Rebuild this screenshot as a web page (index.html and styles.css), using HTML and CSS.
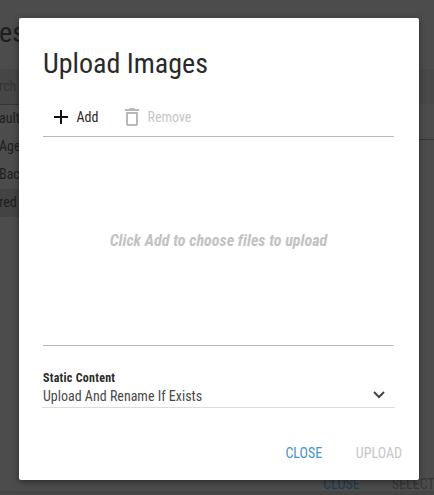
FILE: index.html
```html
<!DOCTYPE html>
<html lang="en">
<head>
<meta charset="utf-8">
<title>Upload Images</title>
<link rel="stylesheet" href="styles.css">
</head>
<body>
<div class="page">
  <h2 class="page-title">es</h2>
  <div class="page-body">
    <div class="sidebar">
      <div class="search">rch</div>
      <ul class="tree">
        <li>ault</li>
        <li>Age</li>
        <li>Bac</li>
        <li class="selected">red</li>
      </ul>
    </div>
    <div class="content"><div class="content-bar"></div><div class="content-head"></div></div>
  </div>
  <div class="page-actions"><span class="page-close">CLOSE</span><span class="page-select">SELECT</span></div>
</div>
<section class="dialog" role="dialog">
  <h1><span>Upload Images</span></h1>
  <div class="toolbar">
    <button class="tool add"><svg width="16" height="16" viewBox="0 0 16 16"><path d="M8 1v14M1 8h14" fill="none" stroke="#111" stroke-width="2"/></svg><span>Add</span></button>
    <button class="tool remove" disabled><svg width="14" height="18" viewBox="0 0 14 18"><path d="M0 1h4l1-1h4l1 1h4v2H0zM1 4h12v12q0 2-2 2H3q-2 0-2-2zM3 6v10h8V6z" fill="#b8b8b8" fill-rule="evenodd"/></svg><span>Remove</span></button>
  </div>
  <div class="drop"><span>Click Add to choose files to upload</span></div>
  <div class="field">
    <label>Static Content</label>
    <div class="select"><span>Upload And Rename If Exists</span><svg width="12" height="8" viewBox="0 0 12 8"><path d="M1 1l5 5 5-5" fill="none" stroke="#444" stroke-width="2"/></svg></div>
  </div>
  <div class="actions"><button class="close">CLOSE</button><button class="upload" disabled>UPLOAD</button></div>
</section>
</body>
</html>
```
FILE: styles.css
```css
* { box-sizing: border-box; }
body { margin: 0; width: 434px; height: 495px; overflow: hidden; position: relative; background: #4c4c4c; font-family: "Roboto Condensed", Roboto, sans-serif; font-stretch: 75%; font-size: 14px; font-weight: 400; color: #2a2a2a; }
h1, h2, ul { margin: 0; padding: 0; font-weight: 400; }
button { font: inherit; letter-spacing: inherit; border: 0; background: none; padding: 0; color: inherit; }
svg { display: block; flex: none; }
.page { height: 495px; display: flex; flex-direction: column; color: #1e1e1e; border-bottom: 4px solid #464646; }
.page-title { height: 69px; padding-top: 16px; font-size: 28px; line-height: 34px; margin-left: -1px; }
.page-body { flex: 1; display: flex; }
.sidebar { width: 217px; }
.content { flex: 1; }
.content-bar { height: 35px; background: #484848; }
.content-head { height: 36px; border-bottom: 1px solid #363636; }
.search { height: 36px; line-height: 35px; background: #464646; border-bottom: 1px solid #363636; color: #343434; text-indent: -1px; }
.tree { list-style: none; }
.tree li { height: 28px; line-height: 27px; margin-left: -1px; }
.tree .selected { background: #434343; }
.page-actions { display: flex; height: 18px; line-height: 22px; padding-left: 323px; gap: 32px; white-space: nowrap; }
.page-close { color: #1b3d55; }
.page-select { color: #363636; }
.dialog { position: absolute; left: 19px; top: 18px; width: 400px; height: 462px; padding: 0 25px 0 24px; background: #fff; border-radius: 2px; box-shadow: 0 2px 6px rgba(0,0,0,.45); display: flex; flex-direction: column; }
.dialog h1 { height: 80px; padding-top: 29px; font-size: 28px; line-height: 34px; }
.toolbar { height: 39px; display: flex; align-items: center; border-bottom: 1px solid #b8b8b8; padding-left: 10px; gap: 27px; }
.tool { display: flex; align-items: center; gap: 7.5px; }
.remove { color: #c6c6c6; gap: 8px; }
.drop { height: 209px; display: flex; align-items: center; justify-content: center; border-bottom: 1px solid #b8b8b8; padding-bottom: 2px; color: #c2c2c2; font-size: 16px; font-weight: 700; font-style: italic; letter-spacing: .04px; }
.field { height: 62px; margin: 0 -1px; padding: 24px 1px 0; border-bottom: 1px solid #dcdcdc; }
.field label { display: block; font-size: 12px; line-height: 16px; font-weight: 700; letter-spacing: .27px; }
.select { display: flex; justify-content: space-between; align-items: center; line-height: 20px; padding-right: 9px; color: #484848; }
.select svg { margin-top: -3px; }
.actions { height: 72px; display: flex; align-items: center; justify-content: flex-end; gap: 33.6px; padding-top: 18px; margin-right: -8px; }
.close { color: #4794c5; }
.upload { color: #c6c6c6; }
```
